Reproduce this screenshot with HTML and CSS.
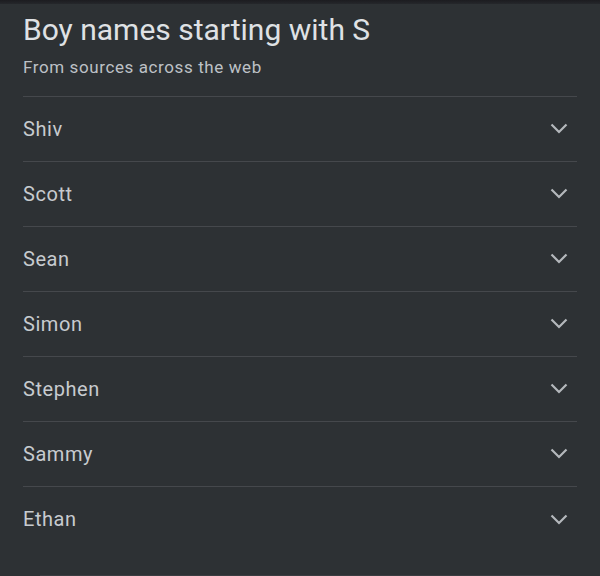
FILE: index.html
```html
<!DOCTYPE html>
<html>
<head>
<meta charset="utf-8">
<link rel="stylesheet" href="styles.css">
</head>
<body>
<div class="topband"></div>
<main class="card">
  <header class="head">
    <h1 class="title">Boy names starting with S</h1>
    <p class="sub">From sources across the web</p>
  </header>
  <ul class="list">
    <li class="row"><span class="name">Shiv</span><svg class="chev" viewBox="0 0 18 11"><path d="M1.5 1.5 L9 9 L16.5 1.5"/></svg></li>
    <li class="row"><span class="name">Scott</span><svg class="chev" viewBox="0 0 18 11"><path d="M1.5 1.5 L9 9 L16.5 1.5"/></svg></li>
    <li class="row"><span class="name">Sean</span><svg class="chev" viewBox="0 0 18 11"><path d="M1.5 1.5 L9 9 L16.5 1.5"/></svg></li>
    <li class="row"><span class="name">Simon</span><svg class="chev" viewBox="0 0 18 11"><path d="M1.5 1.5 L9 9 L16.5 1.5"/></svg></li>
    <li class="row"><span class="name">Stephen</span><svg class="chev" viewBox="0 0 18 11"><path d="M1.5 1.5 L9 9 L16.5 1.5"/></svg></li>
    <li class="row"><span class="name">Sammy</span><svg class="chev" viewBox="0 0 18 11"><path d="M1.5 1.5 L9 9 L16.5 1.5"/></svg></li>
    <li class="row"><span class="name">Ethan</span><svg class="chev" viewBox="0 0 18 11"><path d="M1.5 1.5 L9 9 L16.5 1.5"/></svg></li>
  </ul>
</main>
<div class="nextcard"></div>
</body>
</html>
```
FILE: styles.css
```css
html, body {
  margin: 0;
  padding: 0;
  background: #2d3134;
  height: 576px;
  overflow: hidden;
  font-family: Roboto, "Noto Sans", sans-serif;
}
.topband {
  height: 4px;
  background: linear-gradient(#1c1c20, #25272b);
}
.card {
  padding: 0 23px;
}
.head {
  padding-top: 8px;
  border-bottom: 1px solid #45484c;
  height: 93px;
  box-sizing: border-box;
}
.title {
  margin: 0;
  font-size: 30px;
  font-weight: 400;
  color: #dfe1e4;
  line-height: 36px;
  letter-spacing: 0;
}
.sub {
  margin: 9px 0 0;
  font-size: 17px;
  color: #bdc1c6;
  line-height: 20px;
  letter-spacing: 0.6px;
}
.list {
  list-style: none;
  margin: 0;
  padding: 0;
}
.row {
  height: 65px;
  box-sizing: border-box;
  border-bottom: 1px solid #45484c;
  display: flex;
  align-items: center;
  justify-content: space-between;
  padding-bottom: 1px;
}
.row:last-child {
  border-bottom: none;
}
.name {
  font-size: 20px;
  color: #c7cbcf;
  letter-spacing: 0.55px;
}
.chev {
  width: 18px;
  height: 11px;
  margin-right: 9px;
  fill: none;
  stroke: #b4b8bc;
  stroke-width: 2.2;
}
.nextcard {
  height: 2px;
  margin: 23px 40px 0;
  background: #3a3d41;
}
```
